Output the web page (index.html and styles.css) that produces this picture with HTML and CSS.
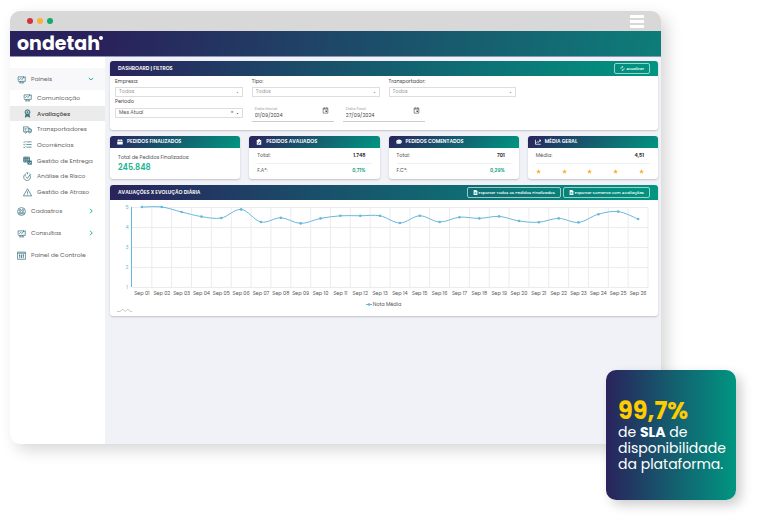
FILE: index.html
```html
<!DOCTYPE html>
<html lang="pt-BR">
<head>
<meta charset="utf-8">
<meta name="viewport" content="width=device-width, initial-scale=1">
<title>ondetah</title>
<link rel="stylesheet" href="styles.css">
</head>
<body>
<svg class="defs" aria-hidden="true">
  <symbol id="board" viewBox="0 0 24 24"><path d="M3 15V5h15M22 4v13H3M6 21h13M9 17l-1 4M15 17l1 4M6 13l4-4 3 3 6-7M16 5h3v3"/></symbol>
  <symbol id="medal" viewBox="0 0 24 24"><path d="M8 13l-2 9 6-3 6 3-2-9z" fill="currentColor"/><circle cx="12" cy="8.500" r="6.500" fill="currentColor"/><circle cx="12" cy="8.500" r="3.500" stroke="#fff"/></symbol>
  <symbol id="truck" viewBox="0 0 24 24"><path d="M1 5h13v13H9M4 18H1V5M14 9h5l4 4v5h-2M14 18h2M4 10h6M4 13h4M18 9v4h5"/><circle cx="7" cy="19" r="2.500"/><circle cx="18" cy="19" r="2.500"/></symbol>
  <symbol id="list" viewBox="0 0 24 24"><path d="M1 5l2 2 4-4M9 5h14M1 12l2 2 4-4M9 12h14M1 19l2 2 4-4M9 19h14"/></symbol>
  <symbol id="delivery" viewBox="0 0 24 24"><path d="M2 3h15v13H2zM2 7h15M6 3v13M11 3v13M2 11h15" stroke-width="2.500"/><path d="M13 13h10v9H13z" fill="currentColor"/><path d="M15 17l3 3 4-4" stroke="#fff"/></symbol>
  <symbol id="timer" viewBox="0 0 24 24"><path d="M8 5a9 9 0 1 0 10 3M9 2h5M12 2v4M18 4l3 3M8 13l4 4 7-11M5 9l3 2"/></symbol>
  <symbol id="alert" viewBox="0 0 24 24"><path d="M12 2L1 21h22zM12 9v6M12 17v2"/></symbol>
  <symbol id="users" viewBox="0 0 24 24"><circle cx="12" cy="12" r="10.500"/><circle cx="8.500" cy="9" r="2.500"/><circle cx="15.500" cy="9" r="2.500"/><path d="M4 17c1-5 7-5 8 0 1-5 7-5 8 0M5 18h14"/></symbol>
  <symbol id="control" viewBox="0 0 24 24"><path d="M1 3h22v19H1zM1 6h22M7 9v10M12 9v10M17 9v10M5 12h4M10 16h4M15 11h4"/></symbol>
  <symbol id="down" viewBox="0 0 24 24"><path d="M3 8l9 8 9-8"/></symbol>
  <symbol id="right" viewBox="0 0 24 24"><path d="M8 3l9 9-9 9"/></symbol>
  <symbol id="caret" viewBox="0 0 24 24"><path d="M4 8h16l-8 9z" fill="currentColor" stroke="none"/></symbol>
  <symbol id="calendar" viewBox="0 0 24 24"><path d="M4 4h16v17H4zM4 7h16M8 1v4M16 1v4"/><path d="M12 12h5v5h-5z" fill="currentColor" stroke="none"/></symbol>
  <symbol id="refresh" viewBox="0 0 24 24"><path d="M4 14A8 8 0 0 1 14 4M11 1l4 3-4 4M20 10a8 8 0 0 1-10 10M13 23l-4-3 4-4" stroke-width="3"/></symbol>
  <symbol id="box" viewBox="0 0 24 24"><path d="M1 9l3-7h7v7zM13 2h7l3 7H13zM1 11h22v11H1z" fill="currentColor" stroke="none"/></symbol>
  <symbol id="clip" viewBox="0 0 24 24"><path d="M3 4h5a4 4 0 0 1 8 0h5v19H3z" fill="currentColor" stroke="none"/><path d="M7 14l4 4 6-8" stroke="#24376a" stroke-width="3"/></symbol>
  <symbol id="chat" viewBox="0 0 24 24"><path d="M12 2c15 0 15 17 0 17-2 0-4 0-5-1-2 2-4 3-6 3 2-2 2-4 2-5C-2 10 2 2 12 2z" fill="currentColor" stroke="none"/><path d="M6 11h2M11 11h2M16 11h2" stroke="#24376a"/></symbol>
  <symbol id="trend" viewBox="0 0 24 24"><path d="M2 3v18h21M6 16l5-6 4 3 7-9M16 4h6v6" stroke-width="3"/></symbol>
  <symbol id="file" viewBox="0 0 24 24"><path d="M3 0h12l6 6v18H3z" fill="currentColor" stroke="none"/><path d="M8 10l8 9M16 10l-8 9" stroke="#0c7f79" stroke-width="3"/></symbol>
  <symbol id="star" viewBox="0 0 24 24"><path d="M12 1l3.300 7.200 7.700.9-5.700 5.300 1.500 7.800-6.800-3.900-6.800 3.900 1.500-7.800L1 9.100l7.700-.9z" fill="currentColor" stroke="none"/></symbol>
</svg>

<div class="window">
  <div class="titlebar">
    <span class="dot red"></span><span class="dot amber"></span><span class="dot green"></span>
    <button class="burger" aria-label="Menu"><span></span><span></span><span></span></button>
  </div>
  <header class="topbar"><a class="logo" href="#">ondetah<span class="logo-dot"></span></a></header>
  <div class="layout">
    <nav class="sidebar">
      <a class="group open" href="#"><svg class="icon"><use href="#board"/></svg>Paineis<svg class="arrow"><use href="#down"/></svg></a>
      <div class="submenu">
        <a href="#"><svg class="icon"><use href="#board"/></svg>Comunicação</a>
        <a class="active" href="#"><svg class="icon"><use href="#medal"/></svg>Avaliações</a>
        <a href="#"><svg class="icon"><use href="#truck"/></svg>Transportadores</a>
        <a href="#"><svg class="icon"><use href="#list"/></svg>Ocorrências</a>
        <a href="#"><svg class="icon"><use href="#delivery"/></svg>Gestão de Entrega</a>
        <a href="#"><svg class="icon"><use href="#timer"/></svg>Análise de Risco</a>
        <a href="#"><svg class="icon"><use href="#alert"/></svg>Gestão de Atraso</a>
      </div>
      <a class="group" href="#"><svg class="icon"><use href="#users"/></svg>Cadastros<svg class="arrow"><use href="#right"/></svg></a>
      <a class="group" href="#"><svg class="icon"><use href="#board"/></svg>Consultas<svg class="arrow"><use href="#right"/></svg></a>
      <a class="group" href="#"><svg class="icon"><use href="#control"/></svg>Painel de Controle</a>
    </nav>

    <main class="main">
      <section class="panel">
        <div class="panel-head"><h2>DASHBOARD | FILTROS</h2><button class="outline"><svg class="mini"><use href="#refresh"/></svg>Atualizar</button></div>
        <form class="filters">
          <div class="field"><label for="empresa">Empresa:</label><div class="pick"><select id="empresa"><option>Todas</option></select><svg class="caret"><use href="#caret"/></svg></div></div>
          <div class="field"><label for="tipo">Tipo:</label><div class="pick"><select id="tipo"><option>Todos</option></select><svg class="caret"><use href="#caret"/></svg></div></div>
          <div class="field"><label for="transp">Transportador:</label><div class="pick"><select id="transp"><option>Todos</option></select><svg class="caret"><use href="#caret"/></svg></div></div>
          <div class="field period"><label for="periodo">Período</label><div class="pick filled"><select id="periodo"><option>Mes Atual</option></select><button type="button" class="clear" aria-label="Limpar">×</button><svg class="caret"><use href="#caret"/></svg></div></div>
          <div class="dates">
            <div class="date"><div><label for="ini">Data Inicial</label><input id="ini" type="text" value="01/09/2024"></div><svg class="cal"><use href="#calendar"/></svg></div>
            <div class="date"><div><label for="fim">Data Final</label><input id="fim" type="text" value="27/09/2024"></div><svg class="cal"><use href="#calendar"/></svg></div>
          </div>
        </form>
      </section>

      <div class="cards">
        <section class="panel card"><div class="card-head"><svg class="card-icon"><use href="#box"/></svg><h2>PEDIDOS FINALIZADOS</h2></div>
          <div class="total"><span>Total de Pedidos Finalizados:</span><strong>245.848</strong></div></section>
        <section class="panel card"><div class="card-head"><svg class="card-icon"><use href="#clip"/></svg><h2>PEDIDOS AVALIADOS</h2></div>
          <div class="rows"><div class="row"><span>Total:</span><b>1.748</b></div><div class="row"><span>F.A*:</span><b class="good">0,71%</b></div></div></section>
        <section class="panel card"><div class="card-head"><svg class="card-icon"><use href="#chat"/></svg><h2>PEDIDOS COMENTADOS</h2></div>
          <div class="rows"><div class="row"><span>Total:</span><b>701</b></div><div class="row"><span>F.C*:</span><b class="good">0,29%</b></div></div></section>
        <section class="panel card"><div class="card-head"><svg class="card-icon"><use href="#trend"/></svg><h2>MÉDIA GERAL</h2></div>
          <div class="rows"><div class="row"><span>Média:</span><b>4,51</b></div><div class="row stars"><svg><use href="#star"/></svg><svg><use href="#star"/></svg><svg><use href="#star"/></svg><svg><use href="#star"/></svg><svg><use href="#star"/></svg></div></div></section>
      </div>

      <section class="panel">
        <div class="panel-head"><h2>AVALIAÇÕES X EVOLUÇÃO DIÁRIA</h2>
          <div class="actions"><button class="outline"><svg class="mini"><use href="#file"/></svg>Exportar Todos os Pedidos Finalizados</button><button class="outline"><svg class="mini"><use href="#file"/></svg>Exportar Somente com Avaliações</button></div></div>
        <svg class="chart" id="chart" viewBox="0 0 548 116" role="img" aria-label="Nota Média"></svg>
      </section>
    </main>
  </div>
</div>

<aside class="sla"><strong>99,7%</strong><p>de <b>SLA</b> de disponibilidade da plataforma.</p></aside>
<script src="chart.js"></script>
</body>
</html>
```
FILE: styles.css
```css
* { box-sizing: border-box; }
body {
  margin: 0;
  min-height: 100vh;
  padding: 11px 96px 77px 10px;
  display: flex;
  position: relative;
  background: #fff;
  color: #555;
  font-family: Poppins, Inter, "Liberation Sans", sans-serif;
  font-size: 5px;
  line-height: 8px;
}
a { color: inherit; text-decoration: none; }
button, input, select { font: inherit; color: inherit; margin: 0; padding: 0; border: 0; background: none; }
h2, p { margin: 0; }
svg { fill: none; stroke: currentColor; stroke-width: 2; flex: none; display: block; }
.defs { position: absolute; width: 0; height: 0; }

.window {
  flex: 1;
  min-width: 0;
  display: flex;
  flex-direction: column;
  border-radius: 10px;
  overflow: hidden;
  box-shadow: 6px 6px 16px rgba(0, 0, 0, .16);
  background: #f0f2f8;
}
.titlebar { height: 20px; padding: 0 17px; display: flex; align-items: center; gap: 4px; background: #d8d8d8; }
.dot { width: 6px; height: 6px; border-radius: 50%; }
.red { background: #cf353d; }
.amber { background: #fbb03b; }
.green { background: #12ab68; }
.burger { margin-left: auto; width: 14px; display: grid; gap: 2px; }
.burger span { height: 3px; background: #fff; }

.topbar { height: 26px; display: flex; background: linear-gradient(100deg, #29235c 16%, #0d7d79); border-bottom: 1px solid #8f95b8; }
.logo { width: 95px; padding-left: 7px; display: flex; align-items: center; background: #29215b; color: #fff; font-size: 19px; font-weight: 700; line-height: 24px; }
.logo-dot { width: 4px; height: 4px; border-radius: 50%; background: #fff; align-self: flex-start; margin-top: 5px; margin-left: -1px; }

.layout { flex: 1; display: flex; }
.sidebar { width: 95px; flex: none; padding-top: 11px; background: #fff; font-size: 6px; color: #666; }
.sidebar a { display: flex; align-items: center; gap: 5px; }
.group { height: 22px; padding: 0 11px 0 7px; }
.open { background: #f8f8fb; }
.icon { width: 9px; height: 9px; color: #3f7680; }
.arrow { width: 6px; height: 6px; margin-left: auto; color: #22b491; stroke-width: 4; }
.submenu { height: 110px; display: grid; grid-auto-rows: 1fr; }
.submenu a { padding-left: 13px; }
.submenu .active { background: #ebebeb; color: #444; font-weight: 500; }

.main { flex: 1; min-width: 0; padding: 4px 3px 4px 5px; display: flex; flex-direction: column; gap: 6px; }
.panel { background: #fff; border-radius: 3px; overflow: hidden; box-shadow: 0 1px 2px rgba(0, 0, 0, .2); }
.panel-head, .card-head { display: flex; align-items: center; color: #fff; background: linear-gradient(135deg, #29235c, #009681); }
.panel-head { height: 15px; padding: 0 8px; justify-content: space-between; background: linear-gradient(100deg, #29235c, #009681); }
h2 { font-size: 5px; font-weight: 600; }
.actions { display: flex; gap: 2px; }
.outline { height: 11px; padding: 0 5px; display: flex; align-items: center; gap: 1px; border: 1px solid rgba(255, 255, 255, .6); border-radius: 2px; font-size: 4px; font-weight: 500; color: #fff; }
.mini { width: 5px; height: 5px; }

.filters { padding: 2px 5px 8px; display: grid; grid-template-columns: repeat(4, minmax(0, 1fr)); column-gap: 9px; row-gap: 1px; color: #444; }
.field { display: grid; grid-template-rows: 9px 10px; }
.pick { display: flex; align-items: center; gap: 2px; padding: 0 3px; border: 1px solid #ddd; color: #999; }
.filled { color: #555; }
.pick select { flex: 1; min-width: 0; height: 8px; appearance: none; }
.caret { width: 3px; height: 3px; }
.clear { line-height: 6px; }
.period { grid-column: 1; grid-template-rows: 10px 10px; }
.dates { grid-column: 2 / -1; display: flex; gap: 9px; padding-top: 6px; }
.date { width: 82px; height: 18px; padding: 2px 5px 0 3px; display: flex; justify-content: space-between; border-bottom: 1px solid #ccc; }
.date label { display: block; font-size: 4px; line-height: 6px; color: #999; }
.date input { display: block; width: 50px; height: 7px; line-height: 7px; }
.cal { width: 7px; height: 7px; margin-top: 1px; }

.cards { display: grid; grid-template-columns: repeat(4, minmax(0, 1fr)); gap: 9px; }
.card-head { height: 12px; padding: 0 7px; gap: 4px; }
.card-icon { width: 6px; height: 6px; }
.total { height: 31px; padding: 6px 8px; display: grid; align-content: start; }
.total strong { color: #22b491; font-size: 8px; font-weight: 600; line-height: 11px; }
.rows { height: 31px; padding: 0 8px; }
.row { height: 15px; padding-right: 6px; display: flex; align-items: center; justify-content: space-between; }
.row + .row { border-top: 1px solid #eee; }
.row b { color: #222; font-weight: 600; }
.row .good { color: #14a184; }
.stars { color: #f9b233; }
.stars svg { width: 5px; height: 5px; }

.chart { width: 100%; height: auto; stroke: none; }
.chart text { font-size: 5px; fill: #555; text-anchor: middle; }
.chart .tick { fill: #67b7dc; }
.grid-line { stroke: #ececec; stroke-width: 1; }
.axis, .series { stroke: #67b7dc; stroke-width: 1; }
.point { fill: #67b7dc; }
.mark { stroke: #ccc; stroke-width: 1; }

.sla {
  position: absolute;
  right: 21px;
  bottom: 21px;
  width: 130px;
  height: 130px;
  padding: 27px 0 0 12px;
  border-radius: 10px;
  color: #fff;
  background: linear-gradient(90deg, #29235c, #009681);
  box-shadow: 5px 5px 12px rgba(0, 0, 0, .2);
  font-size: 14px;
  line-height: 16px;
}
.sla strong { display: block; color: #fc0; font-size: 24px; line-height: 27px; }
```
FILE: chart.js
```js
const svg = document.getElementById('chart');
const left = 22, right = 538, top_ = 7, bottom = 87;
const ratings = [5, 5, 4.75, 4.52, 4.45, 4.88, 4.25, 4.46, 4.18, 4.43, 4.56, 4.56, 4.56, 4.2, 4.56, 4.25, 4.49, 4.43, 4.53, 4.3, 4.24, 4.43, 4.23, 4.64, 4.77, 4.4];
const step = (right - left) / ratings.length;

function add(tag, attrs, text) {
  const node = document.createElementNS('http://www.w3.org/2000/svg', tag);
  for (const key in attrs) node.setAttribute(key, attrs[key]);
  if (text) node.textContent = text;
  svg.appendChild(node);
}

for (let n = 1; n <= 5; n++) {
  const y = bottom - (n - 1) * 20;
  add('path', { class: 'grid-line', d: `M${left} ${y}.5H${right}` });
  add('text', { class: 'tick', x: 17, y: y + 2 }, String(n));
}
for (let i = 1; i <= ratings.length; i++) {
  add('path', { class: 'grid-line', d: `M${left + i * step} ${top_}V${bottom}` });
}
add('path', { class: 'axis', d: `M${left - 0.5} ${top_}V${bottom}` });

const pts = ratings.map((v, i) => [left + (i + 0.5) * step, bottom - (v - 1) * 20]);
let d = `M${pts[0]}`;
for (let i = 1; i < pts.length; i++) {
  const a = pts[i - 2] || pts[i - 1], b = pts[i - 1], c = pts[i], e = pts[i + 1] || c;
  d += `C${b[0] + (c[0] - a[0]) / 6} ${b[1] + (c[1] - a[1]) / 6} ${c[0] - (e[0] - b[0]) / 6} ${c[1] - (e[1] - b[1]) / 6} ${c}`;
}
add('path', { class: 'series', d });
pts.forEach(([x, y], i) => {
  add('circle', { class: 'point', cx: x, cy: y, r: 1.3 });
  add('text', { x, y: 95 }, 'Sep ' + String(i + 1).padStart(2, '0'));
});

add('path', { class: 'series', d: 'M256 104.500h6' });
add('circle', { class: 'point', cx: 259, cy: 104.5, r: 1.3 });
add('text', { x: 277, y: 106 }, 'Nota Média');
add('path', { class: 'mark', d: 'M7 111.500h3l3-2.500 2 2.500 3-2.500 2 2.500h2' });
```
